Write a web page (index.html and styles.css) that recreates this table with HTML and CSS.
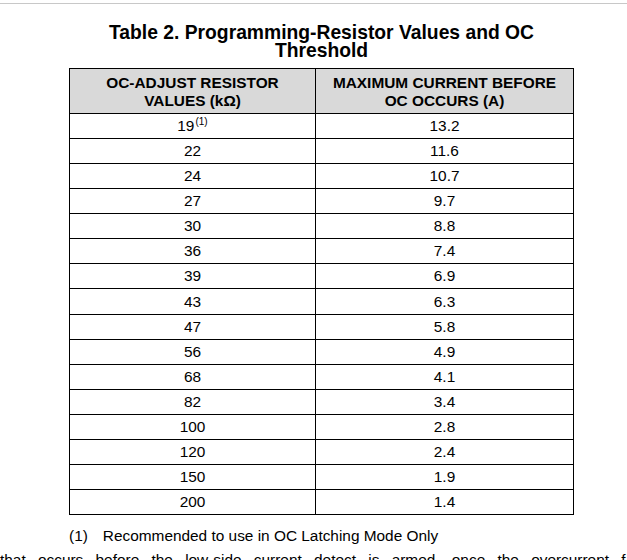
FILE: index.html
```html
<!DOCTYPE html>
<html lang="en">
<head>
<meta charset="utf-8">
<title>Table 2. Programming-Resistor Values and OC Threshold</title>
<link rel="stylesheet" href="styles.css">
</head>
<body>
<div class="rule"></div>
<div class="doc">
  <table class="tbl">
    <caption class="title">Table 2. Programming-Resistor Values and OC Threshold</caption>
    <colgroup>
      <col class="col-a">
      <col class="col-b">
    </colgroup>
    <thead>
      <tr>
        <th>OC-ADJUST RESISTOR<br>VALUES (kΩ)</th>
        <th>MAXIMUM CURRENT BEFORE<br>OC OCCURS (A)</th>
      </tr>
    </thead>
    <tbody>
      <tr><td>19<sup class="fn">(1)</sup></td><td>13.2</td></tr>
      <tr><td>22</td><td>11.6</td></tr>
      <tr><td>24</td><td>10.7</td></tr>
      <tr><td>27</td><td>9.7</td></tr>
      <tr><td>30</td><td>8.8</td></tr>
      <tr><td>36</td><td>7.4</td></tr>
      <tr><td>39</td><td>6.9</td></tr>
      <tr><td>43</td><td>6.3</td></tr>
      <tr><td>47</td><td>5.8</td></tr>
      <tr><td>56</td><td>4.9</td></tr>
      <tr><td>68</td><td>4.1</td></tr>
      <tr><td>82</td><td>3.4</td></tr>
      <tr><td>100</td><td>2.8</td></tr>
      <tr><td>120</td><td>2.4</td></tr>
      <tr><td>150</td><td>1.9</td></tr>
      <tr><td>200</td><td>1.4</td></tr>
    </tbody>
  </table>
  <div class="note">
    <span class="note-num">(1)</span>
    <span class="note-text">Recommended to use in OC Latching Mode Only</span>
  </div>
</div>
<p class="body-text">that occurs before the low-side current detect is armed, once the overcurrent f</p>
</body>
</html>
```
FILE: styles.css
```css
html, body {
  margin: 0;
  padding: 0;
}
body {
  width: 627px;
  height: 560px;
  overflow: hidden;
  background: #fff;
  color: #000;
  font-family: "Liberation Sans", Arial, sans-serif;
}
.rule {
  height: 1px;
  margin-top: 3px;
  background: #c8c8c8;
}
.doc {
  padding-left: 69px;
}
.tbl {
  border-collapse: collapse;
  table-layout: fixed;
  width: 505px;
  margin-top: 20px;
  font-size: 15.4px;
}
.col-a {
  width: 246px;
}
.title {
  font-size: 19.3px;
  font-weight: bold;
  line-height: 18px;
  text-align: center;
  padding: 0 20px 8px;
}
.tbl th,
.tbl td {
  border: 1px solid #000;
  text-align: center;
  padding: 0;
}
.tbl th {
  background: #d9d9d9;
  font-weight: bold;
  line-height: 18px;
  padding: 5px 4px 3px;
}
.tbl td {
  height: 24px;
  line-height: 24px;
}
.tbl tbody tr:nth-child(8) td {
  height: 25px;
}
.fn {
  font-size: 10px;
  line-height: 0;
  vertical-align: 6px;
  margin-left: 1px;
}
.note {
  display: flex;
  gap: 15px;
  font-size: 15.4px;
  line-height: 18px;
  margin-top: 12px;
}
.body-text {
  margin: 6px 0 0 0;
  font-size: 15.4px;
  line-height: 18px;
  white-space: nowrap;
  word-spacing: 8px;
}
```
